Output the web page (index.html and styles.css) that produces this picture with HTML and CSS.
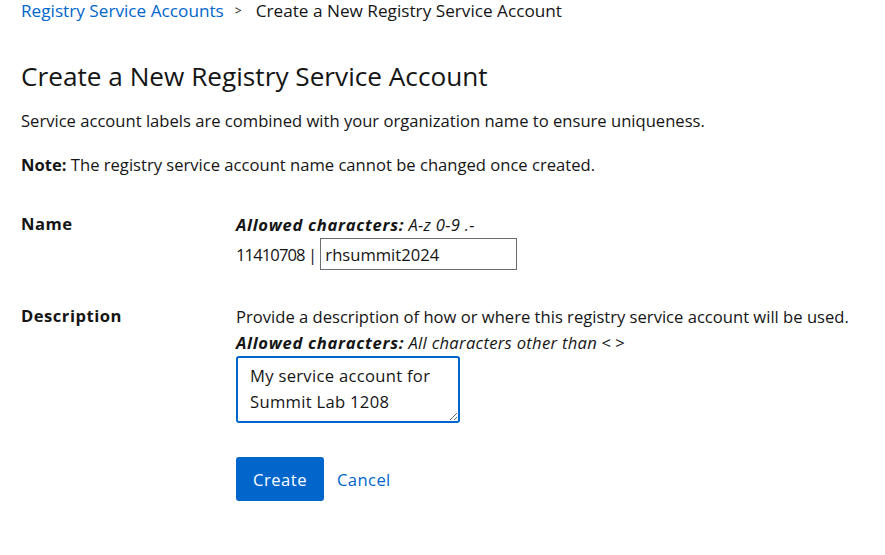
FILE: index.html
```html
<!DOCTYPE html>
<html>
<head>
<meta charset="utf-8">
<link rel="stylesheet" href="styles.css">
</head>
<body>
<div class="page">
  <nav class="breadcrumb">
    <a class="crumb-link" href="#">Registry Service Accounts</a>
    <span class="crumb-sep">&gt;</span>
    <span class="crumb-current">Create a New Registry Service Account</span>
  </nav>
  <h1 class="title">Create a New Registry Service Account</h1>
  <p class="intro">Service account labels are combined with your organization name to ensure uniqueness.</p>
  <p class="note"><strong>Note:</strong> The registry service account name cannot be changed once created.</p>

  <div class="form">
    <div class="label">Name</div>
    <div class="field">
      <div class="help"><b class="help-key">Allowed characters:</b> <i class="help-val">A-z 0-9 .-</i></div>
      <div class="name-row"><span class="prefix">11410708 |</span><input class="text-input" type="text" value="rhsummit2024"></div>
    </div>

    <div class="label desc-label">Description</div>
    <div class="field desc-field">
      <div class="help-plain">Provide a description of how or where this registry service account will be used.</div>
      <div class="help"><b class="help-key">Allowed characters:</b> <i class="help-val">All characters other than</i> <span class="angles">&lt; &gt;</span></div>
      <textarea class="textarea">My service account for Summit Lab 1208</textarea>
      <div class="actions">
        <button class="btn-primary">Create</button>
        <a class="btn-link" href="#">Cancel</a>
      </div>
    </div>
  </div>
</div>
</body>
</html>
```
FILE: styles.css
```css
* { box-sizing: border-box; }
html, body { margin: 0; padding: 0; background: #fff; }
body {
  font-family: "Open Sans", sans-serif;
  font-size: 16.6px;
  color: #151515;
}
.page { padding: 0 21px; }
.breadcrumb { display: flex; align-items: center; height: 22px; line-height: 22px; font-size: 17.2px; }
.crumb-link { color: #0066cc; text-decoration: none; }
.crumb-sep { margin: 0 14px 0 11px; font-size: 12px; color: #151515; }
.crumb-current { color: #151515; }
.title {
  margin: 39px 0 0 0;
  font-family: "Open Sans", sans-serif;
  font-weight: 400;
  font-size: 26.2px;
  line-height: 30px;
}
.intro { margin: 18px 0 0 0; line-height: 24px; }
.note { margin: 20px 0 0 0; line-height: 24px; }
.note strong { font-weight: 700; }
.form {
  margin-top: 35px;
  display: grid;
  grid-template-columns: 215px 1fr;
}
.label { font-weight: 700; line-height: 24px; letter-spacing: 0.5px; }
.help, .help-plain { line-height: 26px; }
.help-key { font-weight: 700; font-style: italic; letter-spacing: 0.7px; }
.help-val { font-style: italic; letter-spacing: 0.3px; }
.name-row { display: flex; align-items: center; margin-top: 0; }
.prefix { margin-right: 4px; letter-spacing: -0.9px; }
.text-input {
  width: 197px; height: 32px;
  border: 1px solid #6a6e73;
  border-radius: 0;
  font: inherit; color: #151515;
  padding: 0 4px;
}
.desc-label, .desc-field { margin-top: 34px; }
.textarea {
  display: block;
  width: 224px; height: 67px;
  margin-top: 0;
  border: 2px solid #0066cc;
  border-radius: 3px;
  font: inherit; color: #151515;
  line-height: 26px;
  padding: 5px 12px;
  resize: both;
  outline: none;
  letter-spacing: 0.3px;
}
.actions { display: flex; align-items: center; margin-top: 34px; }
.btn-primary {
  background: #0066cc; color: #fff; border: none; border-radius: 3px;
  font: inherit; height: 44px; width: 88px; padding: 0; letter-spacing: 0.5px;
}
.btn-link { color: #0066cc; text-decoration: none; margin-left: 13px; letter-spacing: 0.4px; }
```
